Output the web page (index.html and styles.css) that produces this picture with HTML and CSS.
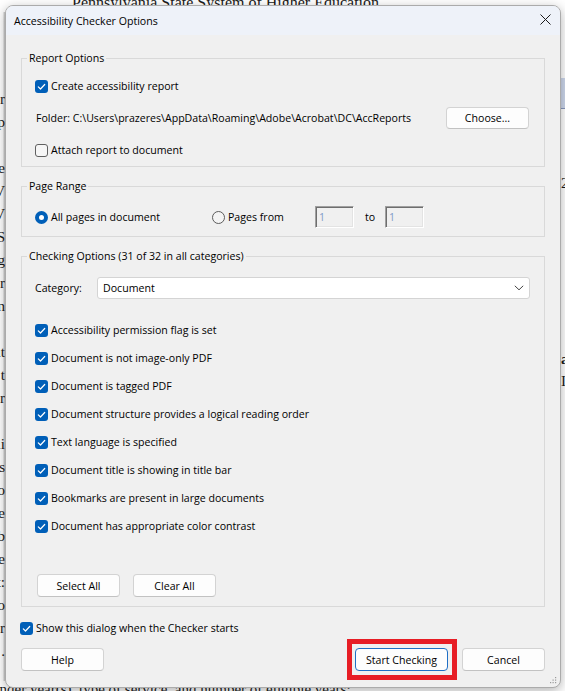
FILE: index.html
```html
<!DOCTYPE html>
<html lang="en">
<head>
<meta charset="utf-8">
<title>Accessibility Checker Options</title>
<link rel="stylesheet" href="styles.css">
</head>
<body>
<div class="doc">
  <div class="doc-head">Pennsylvania State System of Higher Education</div>
  <div class="doc-mid">
    <div class="edge-left">
      <div><span>ar</span></div><div><span>p</span></div><div><span></span></div><div><span>e</span></div>
      <div><span>V</span></div><div><span>V</span></div><div><span>S</span></div><div><span>g</span></div>
      <div><span>r</span></div><div><span>n</span></div><div><span></span></div><div><span>ut</span></div>
      <div><span>t</span></div><div><span>ur</span></div><div><span></span></div><div><span>li</span></div>
      <div><span>s</span></div><div><span>o</span></div><div><span>e</span></div><div><span>b</span></div>
      <div><span>e</span></div><div><span>t:</span></div><div><span>o</span></div><div><span>ir</span></div>
      <div><span>.</span></div>
    </div>
    <div class="edge-right">
      <div class="sel-band"></div>
      <div class="edge-char c1">2</div>
      <div class="edge-char c2">a</div>
      <div class="edge-char c3">I</div>
    </div>
  </div>
  <div class="doc-foot">under year(s), type of service, and number of eligible years:</div>
</div>

<div class="dialog">
  <div class="titlebar">
    <span class="title">Accessibility Checker Options</span>
    <svg class="close" width="11" height="11" viewBox="0 0 11 11"><path d="M0.5 0.5L10.5 10.5M10.5 0.5L0.5 10.5" stroke="#1b1b1b" stroke-width="1" fill="none"/></svg>
  </div>
  <div class="content">
    <fieldset class="group">
      <legend>Report Options</legend>
      <div class="group-body report-body">
        <label class="check">
          <span class="box on"><svg viewBox="0 0 13 13" width="13" height="13"><path d="M3.3 6.8l2.2 2.2 4.2-4.5" fill="none" stroke="#fff" stroke-width="1.2" stroke-linecap="round" stroke-linejoin="round"/></svg></span>
          <span>Create accessibility report</span>
        </label>
        <div class="folder-row">
          <span class="folder">Folder: C:\Users\prazeres\AppData\Roaming\Adobe\Acrobat\DC\AccReports</span>
          <button class="btn choose">Choose...</button>
        </div>
        <label class="check">
          <span class="box"></span>
          <span>Attach report to document</span>
        </label>
      </div>
    </fieldset>

    <fieldset class="group">
      <legend>Page Range</legend>
      <div class="group-body range-body">
        <label class="radio-label all"><span class="radio on"></span><span>All pages in document</span></label>
        <label class="radio-label from"><span class="radio"></span><span>Pages from</span></label>
        <span class="num">1</span>
        <span class="to">to</span>
        <span class="num">1</span>
      </div>
    </fieldset>

    <fieldset class="group">
      <legend>Checking Options (31 of 32 in all categories)</legend>
      <div class="group-body checking-body">
        <div class="category-row">
          <span class="cat-label">Category:</span>
          <div class="select">
            <span>Document</span>
            <svg width="10" height="6" viewBox="0 0 10 6"><path d="M0.8 0.8L5 4.8L9.2 0.8" fill="none" stroke="#444" stroke-width="1"/></svg>
          </div>
        </div>
        <div class="check-list">
          <label class="check row"><span class="box on"><svg viewBox="0 0 13 13" width="13" height="13"><path d="M3.3 6.8l2.2 2.2 4.2-4.5" fill="none" stroke="#fff" stroke-width="1.2" stroke-linecap="round" stroke-linejoin="round"/></svg></span><span>Accessibility permission flag is set</span></label>
          <label class="check row"><span class="box on"><svg viewBox="0 0 13 13" width="13" height="13"><path d="M3.3 6.8l2.2 2.2 4.2-4.5" fill="none" stroke="#fff" stroke-width="1.2" stroke-linecap="round" stroke-linejoin="round"/></svg></span><span>Document is not image-only PDF</span></label>
          <label class="check row"><span class="box on"><svg viewBox="0 0 13 13" width="13" height="13"><path d="M3.3 6.8l2.2 2.2 4.2-4.5" fill="none" stroke="#fff" stroke-width="1.2" stroke-linecap="round" stroke-linejoin="round"/></svg></span><span>Document is tagged PDF</span></label>
          <label class="check row"><span class="box on"><svg viewBox="0 0 13 13" width="13" height="13"><path d="M3.3 6.8l2.2 2.2 4.2-4.5" fill="none" stroke="#fff" stroke-width="1.2" stroke-linecap="round" stroke-linejoin="round"/></svg></span><span>Document structure provides a logical reading order</span></label>
          <label class="check row"><span class="box on"><svg viewBox="0 0 13 13" width="13" height="13"><path d="M3.3 6.8l2.2 2.2 4.2-4.5" fill="none" stroke="#fff" stroke-width="1.2" stroke-linecap="round" stroke-linejoin="round"/></svg></span><span>Text language is specified</span></label>
          <label class="check row"><span class="box on"><svg viewBox="0 0 13 13" width="13" height="13"><path d="M3.3 6.8l2.2 2.2 4.2-4.5" fill="none" stroke="#fff" stroke-width="1.2" stroke-linecap="round" stroke-linejoin="round"/></svg></span><span>Document title is showing in title bar</span></label>
          <label class="check row"><span class="box on"><svg viewBox="0 0 13 13" width="13" height="13"><path d="M3.3 6.8l2.2 2.2 4.2-4.5" fill="none" stroke="#fff" stroke-width="1.2" stroke-linecap="round" stroke-linejoin="round"/></svg></span><span>Bookmarks are present in large documents</span></label>
          <label class="check row"><span class="box on"><svg viewBox="0 0 13 13" width="13" height="13"><path d="M3.3 6.8l2.2 2.2 4.2-4.5" fill="none" stroke="#fff" stroke-width="1.2" stroke-linecap="round" stroke-linejoin="round"/></svg></span><span>Document has appropriate color contrast</span></label>
        </div>
        <div class="select-buttons">
          <button class="btn">Select All</button>
          <button class="btn">Clear All</button>
        </div>
      </div>
    </fieldset>

    <label class="check show-row">
      <span class="box on"><svg viewBox="0 0 13 13" width="13" height="13"><path d="M3.3 6.8l2.2 2.2 4.2-4.5" fill="none" stroke="#fff" stroke-width="1.2" stroke-linecap="round" stroke-linejoin="round"/></svg></span>
      <span>Show this dialog when the Checker starts</span>
    </label>

    <div class="footer">
      <button class="btn">Help</button>
      <div class="footer-right">
        <span class="highlight"><button class="btn primary">Start Checking</button></span>
        <button class="btn">Cancel</button>
      </div>
    </div>
  </div>
  <svg class="grip" width="7" height="7" viewBox="0 0 7 7">
    <rect x="5" y="0" width="1.2" height="1.2" fill="#9a9a9a"/>
    <rect x="2.5" y="2.5" width="1.2" height="1.2" fill="#9a9a9a"/>
    <rect x="5" y="2.5" width="1.2" height="1.2" fill="#9a9a9a"/>
    <rect x="0" y="5" width="1.2" height="1.2" fill="#9a9a9a"/>
    <rect x="2.5" y="5" width="1.2" height="1.2" fill="#9a9a9a"/>
    <rect x="5" y="5" width="1.2" height="1.2" fill="#9a9a9a"/>
  </svg>
</div>
</body>
</html>
```
FILE: styles.css
```css
* { box-sizing: border-box; }
html, body { margin: 0; padding: 0; }
body {
  width: 565px;
  height: 691px;
  overflow: hidden;
  position: relative;
  background: #ffffff;
  font-family: "Open Sans", "Noto Sans", sans-serif;
}

/* background document */
.doc {
  height: 691px;
  display: flex;
  flex-direction: column;
  font-family: "Liberation Serif", serif;
  color: #1a1a1a;
}
.doc-head {
  font-size: 16px;
  line-height: 18px;
  height: 18px;
  margin-top: -6px;
  padding-left: 72px;
  white-space: nowrap;
  flex: none;
}
.doc-mid {
  flex: 1;
  display: flex;
  justify-content: space-between;
  min-height: 0;
}
.edge-left {
  width: 5px;
  overflow: hidden;
  padding-top: 76px;
  font-size: 15px;
  line-height: 23px;
  background: linear-gradient(to right, #ffffff 0, #ffffff 3px, #d4d4d4 4px, #c8c8c8 5px);
}
.edge-left div {
  display: flex;
  justify-content: flex-end;
  height: 23px;
  white-space: nowrap;
}
.edge-right {
  width: 4px;
  overflow: hidden;
  font-size: 15px;
  line-height: 18px;
  display: flex;
  flex-direction: column;
}
.sel-band {
  margin-top: 66px;
  height: 31px;
  background: #cdd7ec;
  border-bottom: 1px solid #8797bd;
  flex: none;
}
.edge-char { flex: none; white-space: nowrap; }
.c1 { margin-top: 65px; }
.c2 { margin-top: 158px; font-weight: bold; }
.c3 { margin-top: 4px; }
.doc-foot {
  flex: none;
  font-size: 15px;
  line-height: 17px;
  height: 17px;
  margin-bottom: -7px;
  margin-left: -8px;
  white-space: nowrap;
}

/* dialog */
.dialog {
  position: absolute;
  left: 5px;
  top: 5px;
  width: 556px;
  background: #f0f0f0;
  border: 1px solid #ababab;
  border-radius: 8px;
  box-shadow: 0 3px 12px rgba(0, 0, 0, 0.3);
  font-size: 10.6px;
  line-height: 16px;
  color: #000;
}
.titlebar {
  height: 29px;
  background: #eef2f9;
  border-radius: 7px 7px 0 0;
  display: flex;
  align-items: center;
  justify-content: space-between;
  padding: 0 9px 0 8px;
}
.title { font-size: 10.6px; }
.close { display: block; margin-top: -2px; }

.content {
  padding: 15px 15px 16px 15px;
}

.group {
  margin: 0 0 11px 0;
  padding: 0;
  border: 1px solid #d9d9d9;
  min-width: 0;
}
.group legend {
  margin-left: 5px;
  padding: 0 2px;
  line-height: 16px;
}
.group-body { display: flex; }

.report-body {
  flex-direction: column;
  gap: 10px;
  padding: 9px 15px 5px 13px;
}
.check {
  display: flex;
  align-items: center;
  height: 22px;
}
.box {
  display: block;
  flex: none;
  width: 13px;
  height: 13px;
  margin-right: 3px;
  border: 1px solid #606060;
  border-radius: 3px;
  background: #f6f6f6;
}
.box.on {
  border: 0;
  background: #005fb8;
}
.box svg { display: block; }

.folder-row {
  display: flex;
  align-items: center;
  justify-content: space-between;
  height: 22px;
  padding-left: 1px;
}
.btn {
  display: block;
  width: 83px;
  height: 23px;
  padding: 0;
  background: #fdfdfd;
  border: 1px solid #d3d3d3;
  border-bottom-color: #c2c2c2;
  border-radius: 4px;
  font-family: inherit;
  font-size: 10.6px;
  color: #000;
  line-height: 16px;
}
.btn.choose { height: 22px; }

.range-body {
  align-items: center;
  height: 42px;
  padding: 12px 0 8px 13px;
  box-sizing: content-box;
  height: 22px;
}
.radio-label {
  display: flex;
  align-items: center;
  flex: none;
}
.radio-label.all { width: 177px; }
.radio-label.from { width: 103px; }
.radio {
  display: block;
  flex: none;
  width: 13px;
  height: 13px;
  margin-right: 3px;
  border-radius: 50%;
  border: 1px solid #5c5c5c;
  background: #f4f4f4;
}
.radio.on {
  border: 4px solid #005fb8;
  background: #ffffff;
}
.num {
  display: block;
  flex: none;
  width: 39px;
  height: 22px;
  background: #f0f0f0;
  border-top: 1px solid #a0a0a0;
  border-left: 1px solid #a0a0a0;
  border-right: 1px solid #ffffff;
  border-bottom: 1px solid #ffffff;
  box-shadow: inset 1px 1px 0 #6e6e6e, inset -1px -1px 0 #e3e3e3;
  color: #7f9cc8;
  padding-left: 3px;
  line-height: 20px;
}
.to {
  display: block;
  flex: none;
  width: 31px;
  padding-left: 11px;
}

.checking-body {
  flex-direction: column;
  padding: 13px 14px 9px 13px;
}
.category-row {
  display: flex;
  align-items: center;
  height: 22px;
}
.cat-label { width: 62px; flex: none; }
.select {
  flex: 1;
  height: 22px;
  display: flex;
  align-items: center;
  justify-content: space-between;
  padding: 0 5px 0 5px;
  background: #ffffff;
  border: 1px solid #d4d4d4;
  border-radius: 3px;
}
.select svg { display: block; }
.check-list {
  margin-top: 17px;
  display: flex;
  flex-direction: column;
}
.check.row { height: 28px; }
.select-buttons {
  display: flex;
  gap: 13px;
  margin-top: 34px;
  padding-left: 2px;
}

.show-row {
  height: 20px;
  margin-left: -1px;
}
.footer {
  display: flex;
  justify-content: space-between;
  margin-top: 10px;
}
.footer-right {
  display: flex;
  gap: 14px;
}
.highlight {
  position: relative;
  display: block;
}
.highlight::after {
  content: "";
  position: absolute;
  left: -8px;
  right: -9px;
  top: -9px;
  bottom: -9px;
  border: 5px solid #e71d25;
}
.btn.primary {
  width: 93px;
  border-color: #1f6fc5;
}
.grip {
  position: absolute;
  right: 3px;
  bottom: 3px;
  display: block;
}
```
